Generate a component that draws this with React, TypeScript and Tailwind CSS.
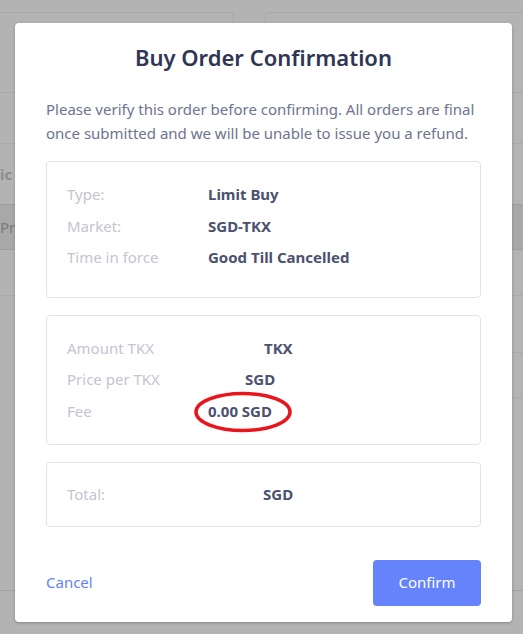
import React from 'react';

const FONT = { fontFamily: '"Noto Sans", "Open Sans", sans-serif' };

type Row = { label: string; value: string; indent?: string; circled?: boolean };

const orderRows: Row[] = [
  { label: 'Type:', value: 'Limit Buy' },
  { label: 'Market:', value: 'SGD-TKX' },
  { label: 'Time in force', value: 'Good Till Cancelled' },
];

const amountRows: Row[] = [
  { label: 'Amount TKX', value: 'TKX', indent: 'ml-[56px]' },
  { label: 'Price per TKX', value: 'SGD', indent: 'ml-[37px]' },
  { label: 'Fee', value: '0.00 SGD', circled: true },
];

const totalRows: Row[] = [{ label: 'Total:', value: 'SGD', indent: 'ml-[55px]' }];

const DetailRow: React.FC<{ row: Row }> = ({ row }) => (
  <div className="flex items-center leading-[31.5px] text-[15px]">
    <span className="w-[141px] shrink-0 text-[#c3c5cf]">{row.label}</span>
    <span className={`relative font-bold text-[#4b5170] ${row.indent ?? ''}`}>
      {row.value}
      {row.circled && (
        // red annotation ring drawn over the fee value
        <svg
          className="absolute left-[-15px] top-[-5px] pointer-events-none"
          width="102"
          height="42"
          viewBox="0 0 102 42"
        >
          <ellipse cx="50" cy="21" rx="47" ry="18.5" fill="none" stroke="#e8141e" strokeWidth="3.5" />
        </svg>
      )}
    </span>
  </div>
);

const DetailCard: React.FC<{ rows: Row[]; pad: string }> = ({ rows, pad }) => (
  <div className={`border border-[#e2e2e6] rounded-[4px] pl-[20px] ${pad}`}>
    {rows.map((r) => (
      <DetailRow key={r.label} row={r} />
    ))}
  </div>
);

const App: React.FC = () => {
  return (
    <div className="relative w-[523px] h-[634px] overflow-hidden bg-[#b3b3b3]" style={FONT}>
      {/* Dimmed page behind the dialog */}
      <div className="pt-[12px]">
        <div className="flex gap-[31px] h-[80px]">
          <div className="w-[238px] -ml-[4px] border border-b-0 border-[#a9a9a9] rounded-t-[4px]" />
          <div className="flex-1 -mr-[4px] border border-b-0 border-[#a9a9a9] rounded-t-[4px]" />
        </div>
        <div className="border-t border-[#a9a9a9] h-[51px]" />
        <div className="border-t border-[#a9a9a9] h-[61px] flex items-center text-[15px] font-bold text-[#8c8c8c]">
          <span>ic</span>
        </div>
        <div className="h-[46px] bg-[#a8a8a8] border-y border-[#9e9e9e] flex items-center text-[15px] text-[#7a7a7a]">
          <span>Pri</span>
        </div>
        <div className="h-[46px] border-b border-[#a9a9a9]" />
        <div className="h-[294px] flex justify-end items-start pt-[56px]">
          <div className="w-[20px] h-[46px] border border-r-0 border-[#a9a9a9] rounded-l-[4px]" />
        </div>
        <div className="border-t border-[#a0a0a0]" />
      </div>

      {/* Modal */}
      <div className="absolute left-[15px] top-[23px] w-[497px] bg-white rounded-[4px] shadow-[0_1px_3px_rgba(0,0,0,0.25)] px-[31px] pt-[19px] pb-[16px]">
        <h2 className="text-center text-[22px] leading-[30px] font-semibold text-[#2f3654]">
          Buy Order Confirmation
        </h2>
        <p className="mt-[25px] text-[15px] leading-[24px] text-[#6e7391]">
          Please verify this order before confirming. All orders are final once submitted and we will be unable to issue you a refund.
        </p>

        <div className="mt-[16px] flex flex-col gap-[17px]">
          <DetailCard rows={orderRows} pad="pt-[17px] pb-[23px]" />
          <DetailCard rows={amountRows} pad="pt-[17px] pb-[17px]" />
          <DetailCard rows={totalRows} pad="pt-[16px] pb-[15px]" />
        </div>

        <div className="mt-[33px] flex items-center justify-between">
          <button className="text-[15px] text-[#6482fa]">Cancel</button>
          <button className="w-[108px] h-[46px] rounded-[4px] bg-[#6583fa] text-white text-[15px]">
            Confirm
          </button>
        </div>
      </div>
    </div>
  );
};

export default App;
